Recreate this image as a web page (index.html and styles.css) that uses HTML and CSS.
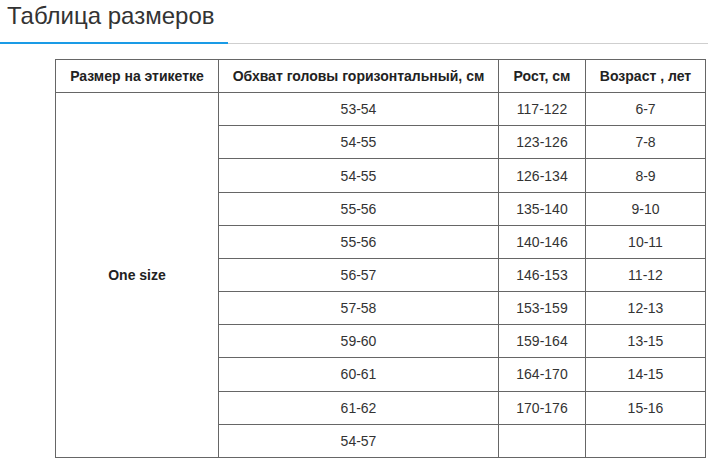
FILE: index.html
```html
<!DOCTYPE html>
<html lang="ru">
<head>
<meta charset="utf-8">
<title>Таблица размеров</title>
<link rel="stylesheet" href="styles.css">
</head>
<body>
<div class="page">
  <div class="tab-head">
    <h1 class="tab-title">Таблица размеров</h1>
  </div>
  <div class="tab-rule">
    <div class="rule-active"></div>
    <div class="rule-rest"></div>
  </div>
  <div class="table-wrap">
    <table class="size-table">
      <colgroup>
        <col class="c1"><col class="c2"><col class="c3"><col class="c4">
      </colgroup>
      <thead>
        <tr>
          <th>Размер на этикетке</th>
          <th>Обхват головы горизонтальный, см</th>
          <th>Рост, см</th>
          <th>Возраст , лет</th>
        </tr>
      </thead>
      <tbody>
        <tr><td class="size" rowspan="11">One size</td><td>53-54</td><td>117-122</td><td>6-7</td></tr>
        <tr><td>54-55</td><td>123-126</td><td>7-8</td></tr>
        <tr><td>54-55</td><td>126-134</td><td>8-9</td></tr>
        <tr><td>55-56</td><td>135-140</td><td>9-10</td></tr>
        <tr><td>55-56</td><td>140-146</td><td>10-11</td></tr>
        <tr><td>56-57</td><td>146-153</td><td>11-12</td></tr>
        <tr><td>57-58</td><td>153-159</td><td>12-13</td></tr>
        <tr><td>59-60</td><td>159-164</td><td>13-15</td></tr>
        <tr><td>60-61</td><td>164-170</td><td>14-15</td></tr>
        <tr><td>61-62</td><td>170-176</td><td>15-16</td></tr>
        <tr><td>54-57</td><td></td><td></td></tr>
      </tbody>
    </table>
  </div>
</div>
</body>
</html>
```

FILE: styles.css
```css
html, body {
  margin: 0;
  padding: 0;
  background: #fff;
}
body {
  font-family: "Liberation Sans", Arial, sans-serif;
  color: #333;
}
.page {
  width: 708px;
}
.tab-head {
  padding: 0 0 0 7px;
  height: 42px;
}
.tab-title {
  margin: 0;
  padding-top: 2px;
  font-size: 24px;
  font-weight: normal;
  line-height: 28px;
  color: #333;
}
.tab-rule {
  display: flex;
  align-items: flex-end;
  height: 2px;
}
.rule-active {
  width: 228px;
  height: 2px;
  background: #1a9be6;
}
.rule-rest {
  flex: 1;
  height: 1px;
  background: #cfcfcf;
}
.table-wrap {
  padding: 15px 0 0 55px;
}
.size-table {
  border-collapse: collapse;
  width: 650px;
  table-layout: fixed;
  font-size: 14px;
  color: #333;
}
.c1 { width: 163px; }
.c2 { width: 280px; }
.c3 { width: 87px; }
.c4 { width: 120px; }
.size-table th,
.size-table td {
  border: 1px solid #666;
  text-align: center;
  vertical-align: middle;
  height: 33.17px;
  padding: 0 4px;
  box-sizing: border-box;
  line-height: 16px;
}
.size-table th {
  font-weight: bold;
  color: #222;
}
.size-table td.size {
  font-weight: bold;
  color: #222;
}
```
